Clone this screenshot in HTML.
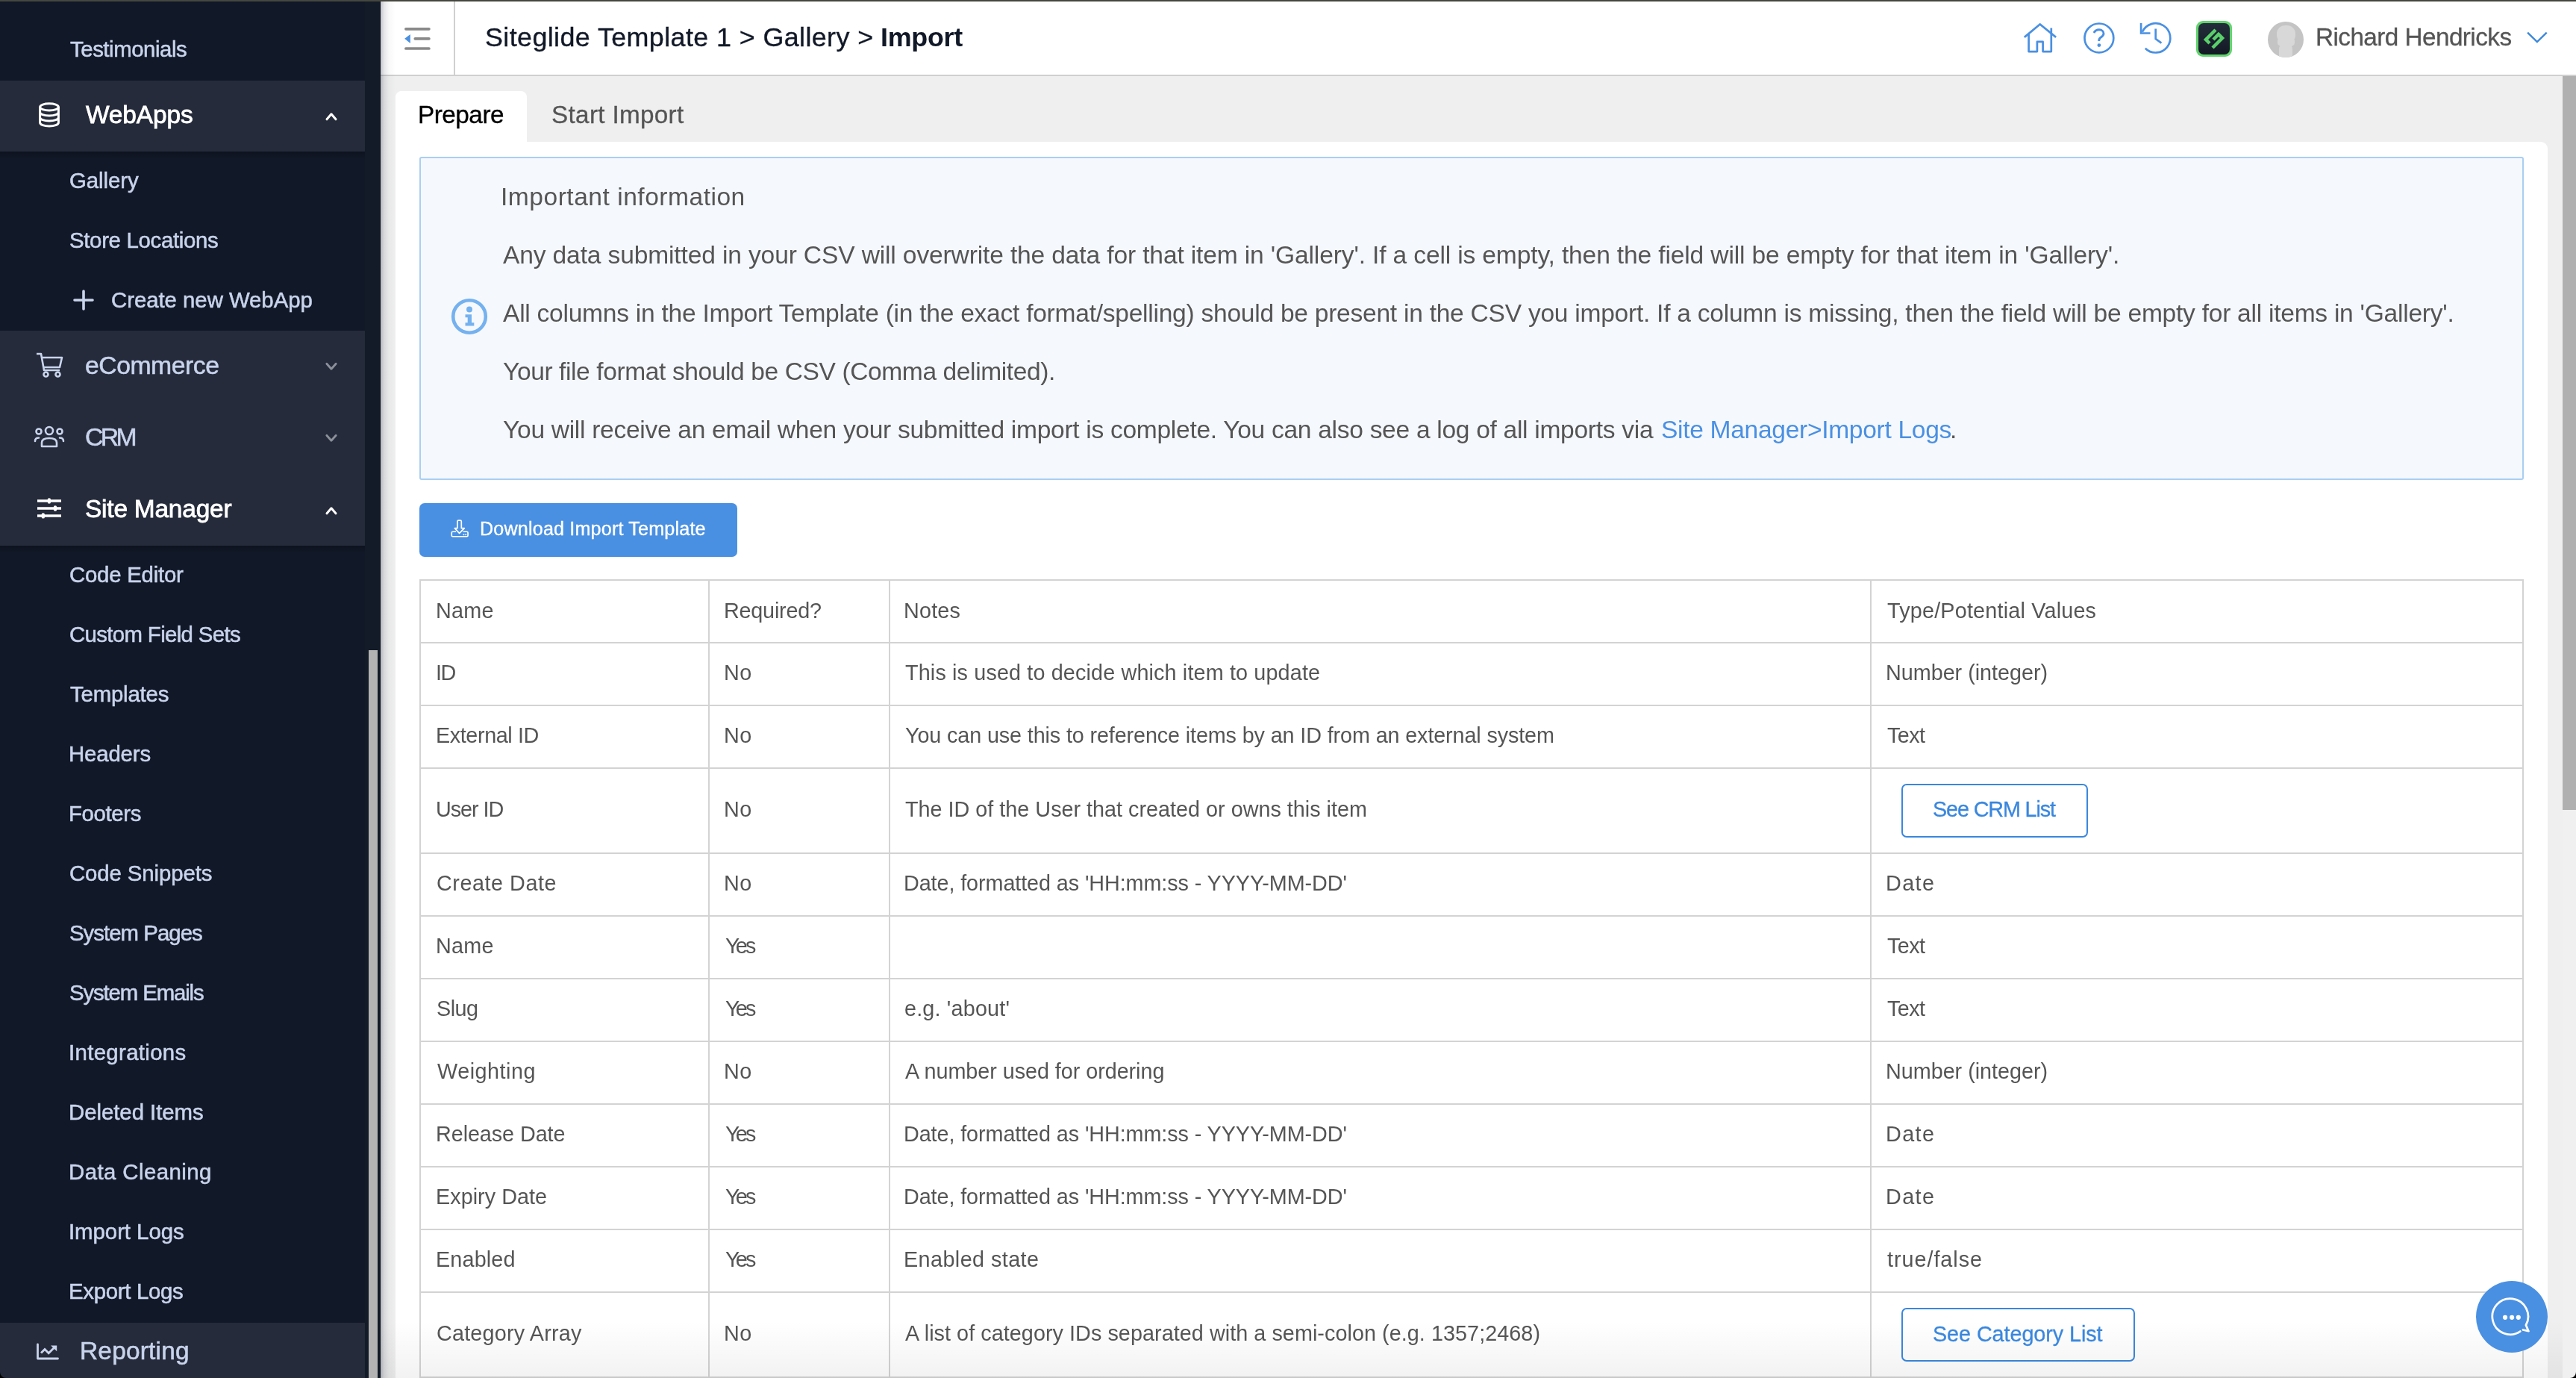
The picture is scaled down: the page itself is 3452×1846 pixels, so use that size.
<!DOCTYPE html>
<html><head><meta charset="utf-8"><style>
html,body{margin:0;padding:0}
body{width:3452px;height:1846px;overflow:hidden;position:relative;font-family:"Liberation Sans",sans-serif;background:#efefef}
.r{position:absolute}
.t{position:absolute;white-space:nowrap;line-height:1;will-change:transform}
.sb{-webkit-text-stroke:0.55px currentColor}
</style></head><body>
<div class="r" style="left:0px;top:0px;width:510px;height:1846px;background:#111827;"></div>
<div class="r" style="left:0px;top:108px;width:489px;height:95px;background:#252b3a;"></div>
<div class="r" style="left:0px;top:443px;width:489px;height:96px;background:#252b3a;"></div>
<div class="r" style="left:0px;top:539px;width:489px;height:96px;background:#252b3a;"></div>
<div class="r" style="left:0px;top:635px;width:489px;height:96px;background:#252b3a;"></div>
<div class="r" style="left:0px;top:1772px;width:489px;height:74px;background:#252b3a;"></div>
<div class="r" style="left:0px;top:203px;width:489px;height:10px;background:linear-gradient(rgba(0,0,0,0.22),rgba(0,0,0,0));"></div>
<div class="r" style="left:0px;top:731px;width:489px;height:10px;background:linear-gradient(rgba(0,0,0,0.22),rgba(0,0,0,0));"></div>
<div class="r" style="left:489px;top:0px;width:21px;height:1846px;background:#131a28;"></div>
<div class="r" style="left:494px;top:871px;width:12px;height:975px;background:#b3b3b3;"></div>
<div class="r" style="left:509px;top:2px;width:1px;height:1844px;background:#0a101c;"></div>
<div class="r" style="left:510px;top:2px;width:2942px;height:98px;background:#ffffff;"></div>
<div class="r" style="left:510px;top:100px;width:2942px;height:2px;background:#cfcfcf;"></div>
<div class="r" style="left:510px;top:102px;width:2942px;height:1744px;background:#efefef;"></div>
<div class="r" style="left:608px;top:2px;width:2px;height:98px;background:#d0d0d0;"></div>
<div class="r" style="left:510px;top:2px;width:20px;height:1844px;background:linear-gradient(90deg,rgba(15,25,45,0.26),rgba(15,25,45,0.10) 25%,rgba(15,25,45,0.03) 55%,rgba(15,25,45,0));"></div>
<div class="r" style="left:0px;top:0px;width:3452px;height:2px;background:#45473f;"></div>
<div class="r" style="left:530px;top:122px;width:176px;height:78px;background:#ffffff;border-radius:8px 8px 0 0"></div>
<div class="r" style="left:530px;top:190px;width:2884px;height:1656px;background:#ffffff;border-radius:0 9px 0 0"></div>
<div class="r" style="left:562px;top:210px;width:2820px;height:433px;background:#f5f8fd;border:2px solid #a9cff2;box-sizing:border-box;border-radius:3px"></div>
<div class="r" style="left:562px;top:674px;width:426px;height:72px;background:#4a90e2;border-radius:7px"></div>
<div class="r" style="left:562px;top:776px;width:2820px;height:2px;background:#d3d3d3;"></div>
<div class="r" style="left:562px;top:860px;width:2820px;height:2px;background:#d3d3d3;"></div>
<div class="r" style="left:562px;top:944px;width:2820px;height:2px;background:#d3d3d3;"></div>
<div class="r" style="left:562px;top:1028px;width:2820px;height:2px;background:#d3d3d3;"></div>
<div class="r" style="left:562px;top:1142px;width:2820px;height:2px;background:#d3d3d3;"></div>
<div class="r" style="left:562px;top:1226px;width:2820px;height:2px;background:#d3d3d3;"></div>
<div class="r" style="left:562px;top:1310px;width:2820px;height:2px;background:#d3d3d3;"></div>
<div class="r" style="left:562px;top:1394px;width:2820px;height:2px;background:#d3d3d3;"></div>
<div class="r" style="left:562px;top:1478px;width:2820px;height:2px;background:#d3d3d3;"></div>
<div class="r" style="left:562px;top:1562px;width:2820px;height:2px;background:#d3d3d3;"></div>
<div class="r" style="left:562px;top:1646px;width:2820px;height:2px;background:#d3d3d3;"></div>
<div class="r" style="left:562px;top:1730px;width:2820px;height:2px;background:#d3d3d3;"></div>
<div class="r" style="left:562px;top:1844px;width:2820px;height:2px;background:#d3d3d3;"></div>
<div class="r" style="left:562px;top:776px;width:2px;height:1070px;background:#d3d3d3;"></div>
<div class="r" style="left:949px;top:776px;width:2px;height:1070px;background:#d3d3d3;"></div>
<div class="r" style="left:1191px;top:776px;width:2px;height:1070px;background:#d3d3d3;"></div>
<div class="r" style="left:2506px;top:776px;width:2px;height:1070px;background:#d3d3d3;"></div>
<div class="r" style="left:3380px;top:776px;width:2px;height:1070px;background:#d3d3d3;"></div>
<div class="r" style="left:2548px;top:1050px;width:250px;height:72px;background:transparent;border:2px solid #3a87dd;box-sizing:border-box;border-radius:7px"></div>
<div class="r" style="left:2548px;top:1752px;width:313px;height:72px;background:transparent;border:2px solid #3a87dd;box-sizing:border-box;border-radius:7px"></div>
<div class="r" style="left:3434px;top:102px;width:18px;height:1744px;background:#f0f0f0;"></div>
<div class="r" style="left:3434px;top:102px;width:18px;height:983px;background:#b0b0b0;"></div>
<div class="r" style="left:510px;top:1770px;width:2924px;height:76px;background:linear-gradient(rgba(0,0,0,0),rgba(0,0,0,0.05));"></div>
<div class="r" style="left:3318px;top:1716px;width:96px;height:96px;background:#4a90e2;border-radius:50%"></div>

<svg class="r" style="left:540px;top:34px" width="40" height="36" viewBox="0 0 40 36">
 <path d="M3.9 4.8H34.9M16.3 17.8H34.9M3.9 31H34.9" stroke="#898989" stroke-width="3.7" stroke-linecap="round"/>
 <path d="M2.2 17.8L9.8 11.9V23.9Z" fill="#4a90e2"/>
</svg>
<!-- home -->
<svg class="r" style="left:2708px;top:28px" width="52" height="46" viewBox="0 0 52 46">
 <path d="M4.8 21.9L25.7 4.4L47.1 21.9" fill="none" stroke="#4a90e2" stroke-width="2.7"/>
 <path d="M10.6 17.6V41.1H21.9V27.9H29.6V41.1H40.8V9.5" fill="none" stroke="#4a90e2" stroke-width="2.7" stroke-linejoin="round"/>
</svg>
<!-- help -->
<svg class="r" style="left:2790px;top:28px" width="46" height="46" viewBox="0 0 46 46">
 <circle cx="22.9" cy="22.9" r="19.4" fill="none" stroke="#4a90e2" stroke-width="2.7"/>
 <path d="M15.9 16C17.5 13.1 20 11.8 23 11.8C26.5 11.8 29 14 29 17C29 19.5 27 21 25 22.3C23.5 23.3 22.7 24.8 22.7 27" fill="none" stroke="#4a90e2" stroke-width="2.9"/>
 <circle cx="22.9" cy="32.6" r="2.4" fill="#4a90e2"/>
</svg>
<!-- history -->
<svg class="r" style="left:2864px;top:28px" width="50" height="46" viewBox="0 0 50 46">
 <path d="M10.8 36.7A19.6 19.6 0 1 0 6.9 14.7" fill="none" stroke="#4a90e2" stroke-width="2.7"/>
 <path d="M5.1 3.1V16.5H17.5" fill="none" stroke="#4a90e2" stroke-width="2.7"/>
 <path d="M24.7 10.4V24L32.4 29.6" fill="none" stroke="#4a90e2" stroke-width="2.7"/>
</svg>
<!-- logo -->
<div class="r" style="left:2943px;top:28px;width:48px;height:48px;border-radius:9px;background:#62d36e"></div>
<div class="r" style="left:2946px;top:31px;width:42px;height:42px;border-radius:7px;background:linear-gradient(#232c3b,#141a24)"></div>
<svg class="r" style="left:2946px;top:31px" width="42" height="42" viewBox="0 0 42 42">
 <path d="M22 7L8 21L14 27L28 13Z M20 35L34 21L28 15L14 29Z" fill="#5bd36a" opacity="0"/>
 <path d="M23 9L10 22L15 27" fill="none" stroke="#5ad06a" stroke-width="4.5" stroke-linejoin="miter"/>
 <path d="M19 33L32 20L27 15L20 22" fill="none" stroke="#5ad06a" stroke-width="4.5" stroke-linejoin="miter"/>
</svg>
<!-- avatar -->
<div class="r" style="left:3039px;top:29px;width:48px;height:48px;border-radius:50%;background:#c4c4c4;overflow:hidden">
 <div class="r" style="left:11.5px;top:5px;width:25px;height:24px;border-radius:46%;background:#d8d8d8"></div>
 <div class="r" style="left:12.5px;top:20px;width:23px;height:14px;border-radius:40%;background:#d8d8d8"></div>
 <div class="r" style="left:15px;top:28px;width:18px;height:24px;border-radius:9px 9px 0 0;background:#d8d8d8"></div>
</div>
<svg class="r" style="left:3384px;top:42px" width="32" height="18" viewBox="0 0 32 18">
 <path d="M3.1 1.6L15.9 14.1L28.7 1.6" fill="none" stroke="#3a87dd" stroke-width="2.3"/>
</svg>
<!-- sidebar icons -->
<svg class="r" style="left:50px;top:135.5px" width="32" height="36" viewBox="0 0 32 36">
 <ellipse cx="16" cy="7.3" rx="12.4" ry="4.6" fill="none" stroke="#fff" stroke-width="3"/>
 <path d="M3.6 7.3V28.2C3.6 31 9 33 16 33C23 33 28.4 31 28.4 28.2V7.3M3.6 14.2C3.6 17 9 19 16 19C23 19 28.4 17 28.4 14.2M3.6 21.2C3.6 24 9 26 16 26C23 26 28.4 24 28.4 21.2" fill="none" stroke="#fff" stroke-width="3"/>
</svg>
<svg class="r" style="left:430px;top:146px" width="26" height="20" viewBox="0 0 26 20">
 <path d="M8 13.8L14 6.8L20 13.8" fill="none" stroke="#fff" stroke-width="3" stroke-linecap="round" stroke-linejoin="round"/>
</svg>
<svg class="r" style="left:95.5px;top:386px" width="32" height="32" viewBox="0 0 32 32">
 <path d="M16 4V28M4 16H28" stroke="#c8d3ec" stroke-width="3.6" stroke-linecap="round"/>
</svg>
<svg class="r" style="left:46px;top:470px" width="40" height="38" viewBox="0 0 40 38">
 <path d="M3 4H9L13 26H34M11 9H37L34 22H13" fill="none" stroke="#c8d3ec" stroke-width="2.6" stroke-linejoin="round"/>
 <circle cx="15.5" cy="31.5" r="3" fill="none" stroke="#c8d3ec" stroke-width="2.6"/>
 <circle cx="31.5" cy="31.5" r="3" fill="none" stroke="#c8d3ec" stroke-width="2.6"/>
</svg>
<svg class="r" style="left:430px;top:482px" width="26" height="18" viewBox="0 0 26 18">
 <path d="M7.8 5.2L14 12.2L20.2 5.2" fill="none" stroke="#8b909a" stroke-width="2.8" stroke-linecap="round" stroke-linejoin="round"/>
</svg>
<svg class="r" style="left:44px;top:568px" width="44" height="34" viewBox="0 0 44 34">
 <circle cx="22" cy="9" r="5" fill="none" stroke="#c8d3ec" stroke-width="2.6"/>
 <circle cx="8" cy="10" r="3.5" fill="none" stroke="#c8d3ec" stroke-width="2.6"/>
 <circle cx="36" cy="10" r="3.5" fill="none" stroke="#c8d3ec" stroke-width="2.6"/>
 <path d="M12 30V25C12 21 16 19 22 19C28 19 32 21 32 25V30Z" fill="none" stroke="#c8d3ec" stroke-width="2.6" stroke-linejoin="round"/>
 <path d="M3 23C3 20 5 18.5 8 18.5M41 23C41 20 39 18.5 36 18.5" fill="none" stroke="#c8d3ec" stroke-width="2.6" stroke-linecap="round"/>
</svg>
<svg class="r" style="left:430px;top:578px" width="26" height="18" viewBox="0 0 26 18">
 <path d="M7.8 5.2L14 12.2L20.2 5.2" fill="none" stroke="#8b909a" stroke-width="2.8" stroke-linecap="round" stroke-linejoin="round"/>
</svg>
<svg class="r" style="left:48px;top:664px" width="36" height="34" viewBox="0 0 36 34">
 <path d="M2 6.9H34M2 16.9H34M2 26.9H34" stroke="#fff" stroke-width="3.5"/>
 <path d="M17.9 5.4V8.6M26 15.4V18.6M9.8 25.4V28.4" stroke="#fff" stroke-width="4.4" stroke-linecap="round"/>
</svg>
<svg class="r" style="left:430px;top:674px" width="26" height="20" viewBox="0 0 26 20">
 <path d="M8 13.8L14 6.8L20 13.8" fill="none" stroke="#fff" stroke-width="3" stroke-linecap="round" stroke-linejoin="round"/>
</svg>
<svg class="r" style="left:47px;top:1798px" width="34" height="26" viewBox="0 0 34 26">
 <path d="M3.5 3V22H30.5" fill="none" stroke="#c8d3ec" stroke-width="2.8" stroke-linecap="round" stroke-linejoin="round"/>
 <path d="M9 13.5L13 9.4L18.2 14.7L25 8" fill="none" stroke="#c8d3ec" stroke-width="2.8" stroke-linecap="square"/>
 <path d="M21 4.4H29.2V12.2Z" fill="#c8d3ec"/>
</svg>
<!-- info icon -->
<svg class="r" style="left:603px;top:398px" width="52" height="52" viewBox="0 0 52 52">
 <circle cx="26" cy="26" r="21.8" fill="none" stroke="#74b1ef" stroke-width="4.6"/>
 <circle cx="26" cy="16.6" r="4" fill="#74b1ef"/>
 <path d="M20.5 23.2H29V34.3H32.3V38.6H20.5V34.3H23.7V27.3H20.5Z" fill="#74b1ef"/>
</svg>
<!-- download icon -->
<svg class="r" style="left:602px;top:694px" width="28" height="28" viewBox="0 0 28 28">
 <path d="M10.9 4.6Q10.9 3.1 12.4 3.1H14.8Q16.3 3.1 16.3 4.6V13.6H20.3L13.6 20.4L7.3 13.6H10.9Z" fill="none" stroke="#fff" stroke-width="1.7" stroke-linejoin="round"/>
 <path d="M9 18.25H4.7Q3.25 18.25 3.25 19.7V23.3Q3.25 24.75 4.7 24.75H23.6Q25.05 24.75 25.05 23.3V19.7Q25.05 18.25 23.6 18.25H18.6" fill="none" stroke="#fff" stroke-width="1.7"/>
 <circle cx="19.4" cy="22.3" r="1.05" fill="#fff"/><circle cx="22.2" cy="22.3" r="1.05" fill="#fff"/>
</svg>
<!-- chat -->
<svg class="r" style="left:3318px;top:1716px" width="96" height="96" viewBox="0 0 96 96">
 <path d="M59.2 67.6A24 24 0 1 1 66.9 59.2L70.4 67.2L63 65.5" fill="none" stroke="#fff" stroke-width="2.8" stroke-linecap="round" stroke-linejoin="round"/>
 <circle cx="39" cy="48.8" r="3.1" fill="#fff"/><circle cx="48.1" cy="48.8" r="3.1" fill="#fff"/><circle cx="56.8" cy="48.8" r="3.1" fill="#fff"/>
</svg>
<!-- window corners -->
<svg class="r" style="left:0px;top:1838px" width="8" height="8" viewBox="0 0 12 12"><path d="M0 0V12H12A12 12 0 0 1 0 0Z" fill="#000"/></svg>
<svg class="r" style="left:3444px;top:1838px" width="8" height="8" viewBox="0 0 12 12"><path d="M12 0V12H0A12 12 0 0 0 12 0Z" fill="#000"/></svg>

<div class="t sb" style="left:94px;top:51.15px;font-size:29.36px;color:#c8d3ec;letter-spacing:-0.441px">Testimonials</div>
<div class="t sb" style="left:114.6px;top:136.90px;font-size:33.43px;color:#ffffff;letter-spacing:-0.097px;-webkit-text-stroke:0.8px currentColor">WebApps</div>
<div class="t sb" style="left:93px;top:227.35px;font-size:29.36px;color:#c8d3ec;letter-spacing:-0.053px">Gallery</div>
<div class="t sb" style="left:93px;top:307.15px;font-size:29.36px;color:#c8d3ec;letter-spacing:-0.309px">Store Locations</div>
<div class="t sb" style="left:148.5px;top:387.45px;font-size:29.36px;color:#c8d3ec;letter-spacing:-0.034px">Create new WebApp</div>
<div class="t sb" style="left:114px;top:472.66px;font-size:33.72px;color:#c8d3ec;letter-spacing:-0.459px">eCommerce</div>
<div class="t sb" style="left:114px;top:569.46px;font-size:33.72px;color:#c8d3ec;letter-spacing:-3.601px">CRM</div>
<div class="t sb" style="left:113.6px;top:664.70px;font-size:33.43px;color:#ffffff;letter-spacing:-0.205px;-webkit-text-stroke:0.8px currentColor">Site Manager</div>
<div class="t sb" style="left:93px;top:755.15px;font-size:29.36px;color:#c8d3ec;letter-spacing:-0.226px">Code Editor</div>
<div class="t sb" style="left:93px;top:835.15px;font-size:29.36px;color:#c8d3ec;letter-spacing:-0.636px">Custom Field Sets</div>
<div class="t sb" style="left:94px;top:915.15px;font-size:29.36px;color:#c8d3ec;letter-spacing:-0.179px">Templates</div>
<div class="t sb" style="left:92px;top:995.15px;font-size:29.36px;color:#c8d3ec;letter-spacing:-0.149px">Headers</div>
<div class="t sb" style="left:92px;top:1075.15px;font-size:29.36px;color:#c8d3ec;letter-spacing:-0.359px">Footers</div>
<div class="t sb" style="left:93px;top:1155.15px;font-size:29.36px;color:#c8d3ec;letter-spacing:-0.102px">Code Snippets</div>
<div class="t sb" style="left:93px;top:1235.15px;font-size:29.36px;color:#c8d3ec;letter-spacing:-0.964px">System Pages</div>
<div class="t sb" style="left:93px;top:1315.15px;font-size:29.36px;color:#c8d3ec;letter-spacing:-1.121px">System Emails</div>
<div class="t sb" style="left:92px;top:1395.15px;font-size:29.36px;color:#c8d3ec;letter-spacing:0.342px">Integrations</div>
<div class="t sb" style="left:92px;top:1475.15px;font-size:29.36px;color:#c8d3ec;letter-spacing:-0.038px">Deleted Items</div>
<div class="t sb" style="left:92px;top:1555.15px;font-size:29.36px;color:#c8d3ec;letter-spacing:0.439px">Data Cleaning</div>
<div class="t sb" style="left:92px;top:1635.15px;font-size:29.36px;color:#c8d3ec;letter-spacing:-0.035px">Import Logs</div>
<div class="t sb" style="left:92px;top:1715.15px;font-size:29.36px;color:#c8d3ec;letter-spacing:-0.299px">Export Logs</div>
<div class="t sb" style="left:107px;top:1792.70px;font-size:33.43px;color:#c8d3ec;letter-spacing:0.209px">Reporting</div>
<div class="t" style="left:650px;top:32.81px;font-size:35.9px;color:#111827;letter-spacing:0.388px;-webkit-text-stroke:0.35px currentColor">Siteglide Template 1 &gt; Gallery &gt;</div>
<div class="t" style="left:1180.3px;top:32.81px;font-size:35.9px;color:#111827;letter-spacing:-0.28px;font-weight:700">Import</div>
<div class="t" style="left:3102.6px;top:32.73px;font-size:33.28px;color:#555555;letter-spacing:-0.546px;-webkit-text-stroke:0.3px currentColor">Richard Hendricks</div>
<div class="t" style="left:560px;top:136.83px;font-size:33.28px;color:#000000;letter-spacing:-0.474px;-webkit-text-stroke:0.35px currentColor">Prepare</div>
<div class="t" style="left:739px;top:136.83px;font-size:33.28px;color:#555555;letter-spacing:0.316px;-webkit-text-stroke:0.3px currentColor">Start Import</div>
<div class="t" style="left:671px;top:246.97px;font-size:33.58px;color:#555555;letter-spacing:0.5px">Important information</div>
<div class="t" style="left:674px;top:324.97px;font-size:33.58px;color:#555555;letter-spacing:-0.149px">Any data submitted in your CSV will overwrite the data for that item in 'Gallery'. If a cell is empty, then the field will be empty for that item in 'Gallery'.</div>
<div class="t" style="left:674px;top:402.57px;font-size:33.58px;color:#555555;letter-spacing:-0.266px">All columns in the Import Template (in the exact format/spelling) should be present in the CSV you import. If a column is missing, then the field will be empty for all items in 'Gallery'.</div>
<div class="t" style="left:674px;top:480.57px;font-size:33.58px;color:#555555;letter-spacing:-0.414px">Your file format should be CSV (Comma delimited).</div>
<div class="t" style="left:674px;top:558.57px;font-size:33.58px;color:#555555;letter-spacing:-0.306px">You will receive an email when your submitted import is complete. You can also see a log of all imports via </div>
<div class="t" style="left:2225.5px;top:558.57px;font-size:33.58px;color:#4a90e2;letter-spacing:-0.319px">Site Manager&gt;Import Logs</div>
<div class="t" style="left:2613px;top:558.57px;font-size:33.58px;color:#555555;letter-spacing:0px">.</div>
<div class="t" style="left:643px;top:695.81px;font-size:25.15px;color:#ffffff;letter-spacing:0.172px;-webkit-text-stroke:0.35px currentColor">Download Import Template</div>
<div class="t" style="left:583.5px;top:803.64px;font-size:28.78px;color:#555555;letter-spacing:0.255px">Name</div>
<div class="t" style="left:970px;top:803.64px;font-size:28.78px;color:#555555;letter-spacing:-0.217px">Required?</div>
<div class="t" style="left:1211px;top:803.64px;font-size:28.78px;color:#555555;letter-spacing:0.185px">Notes</div>
<div class="t" style="left:2529px;top:803.64px;font-size:28.78px;color:#555555;letter-spacing:0.194px">Type/Potential Values</div>
<div class="t" style="left:583.5px;top:886.64px;font-size:28.78px;color:#555555;letter-spacing:-1.492px">ID</div>
<div class="t" style="left:970px;top:886.64px;font-size:28.78px;color:#555555;letter-spacing:0.526px">No</div>
<div class="t" style="left:1213px;top:886.64px;font-size:28.78px;color:#555555;letter-spacing:0.142px">This is used to decide which item to update</div>
<div class="t" style="left:2527px;top:886.64px;font-size:28.78px;color:#555555;letter-spacing:-0.022px">Number (integer)</div>
<div class="t" style="left:583.5px;top:970.84px;font-size:28.78px;color:#555555;letter-spacing:-0.401px">External ID</div>
<div class="t" style="left:970px;top:970.84px;font-size:28.78px;color:#555555;letter-spacing:0.526px">No</div>
<div class="t" style="left:1213px;top:970.84px;font-size:28.78px;color:#555555;letter-spacing:-0.125px">You can use this to reference items by an ID from an external system</div>
<div class="t" style="left:2529px;top:970.84px;font-size:28.78px;color:#555555;letter-spacing:-0.587px">Text</div>
<div class="t" style="left:583.5px;top:1070.24px;font-size:28.78px;color:#555555;letter-spacing:-1.036px">User ID</div>
<div class="t" style="left:970px;top:1070.24px;font-size:28.78px;color:#555555;letter-spacing:0.526px">No</div>
<div class="t" style="left:1213px;top:1070.24px;font-size:28.78px;color:#555555;letter-spacing:0.005px">The ID of the User that created or owns this item</div>
<div class="t" style="left:584.5px;top:1168.64px;font-size:28.78px;color:#555555;letter-spacing:0.541px">Create Date</div>
<div class="t" style="left:970px;top:1168.64px;font-size:28.78px;color:#555555;letter-spacing:0.526px">No</div>
<div class="t" style="left:1211px;top:1168.64px;font-size:28.78px;color:#555555;letter-spacing:-0.089px">Date, formatted as 'HH:mm:ss - YYYY-MM-DD'</div>
<div class="t" style="left:2527px;top:1168.64px;font-size:28.78px;color:#555555;letter-spacing:1.412px">Date</div>
<div class="t" style="left:583.5px;top:1252.64px;font-size:28.78px;color:#555555;letter-spacing:0.255px">Name</div>
<div class="t" style="left:972px;top:1252.64px;font-size:28.78px;color:#555555;letter-spacing:-2.771px">Yes</div>
<div class="t" style="left:2529px;top:1252.64px;font-size:28.78px;color:#555555;letter-spacing:-0.587px">Text</div>
<div class="t" style="left:584.5px;top:1337.04px;font-size:28.78px;color:#555555;letter-spacing:-0.525px">Slug</div>
<div class="t" style="left:972px;top:1337.04px;font-size:28.78px;color:#555555;letter-spacing:-2.771px">Yes</div>
<div class="t" style="left:1212px;top:1337.04px;font-size:28.78px;color:#555555;letter-spacing:0.177px">e.g. 'about'</div>
<div class="t" style="left:2529px;top:1337.04px;font-size:28.78px;color:#555555;letter-spacing:-0.587px">Text</div>
<div class="t" style="left:585.5px;top:1421.04px;font-size:28.78px;color:#555555;letter-spacing:0.513px">Weighting</div>
<div class="t" style="left:970px;top:1421.04px;font-size:28.78px;color:#555555;letter-spacing:0.526px">No</div>
<div class="t" style="left:1213px;top:1421.04px;font-size:28.78px;color:#555555;letter-spacing:-0.047px">A number used for ordering</div>
<div class="t" style="left:2527px;top:1421.04px;font-size:28.78px;color:#555555;letter-spacing:-0.022px">Number (integer)</div>
<div class="t" style="left:583.5px;top:1504.64px;font-size:28.78px;color:#555555;letter-spacing:-0.072px">Release Date</div>
<div class="t" style="left:972px;top:1504.64px;font-size:28.78px;color:#555555;letter-spacing:-2.771px">Yes</div>
<div class="t" style="left:1211px;top:1504.64px;font-size:28.78px;color:#555555;letter-spacing:-0.089px">Date, formatted as 'HH:mm:ss - YYYY-MM-DD'</div>
<div class="t" style="left:2527px;top:1504.64px;font-size:28.78px;color:#555555;letter-spacing:1.412px">Date</div>
<div class="t" style="left:583.5px;top:1588.64px;font-size:28.78px;color:#555555;letter-spacing:0.032px">Expiry Date</div>
<div class="t" style="left:972px;top:1588.64px;font-size:28.78px;color:#555555;letter-spacing:-2.771px">Yes</div>
<div class="t" style="left:1211px;top:1588.64px;font-size:28.78px;color:#555555;letter-spacing:-0.089px">Date, formatted as 'HH:mm:ss - YYYY-MM-DD'</div>
<div class="t" style="left:2527px;top:1588.64px;font-size:28.78px;color:#555555;letter-spacing:1.412px">Date</div>
<div class="t" style="left:583.5px;top:1672.64px;font-size:28.78px;color:#555555;letter-spacing:0.155px">Enabled</div>
<div class="t" style="left:972px;top:1672.64px;font-size:28.78px;color:#555555;letter-spacing:-2.771px">Yes</div>
<div class="t" style="left:1211px;top:1672.64px;font-size:28.78px;color:#555555;letter-spacing:0.423px">Enabled state</div>
<div class="t" style="left:2529px;top:1672.64px;font-size:28.78px;color:#555555;letter-spacing:0.964px">true/false</div>
<div class="t" style="left:584.5px;top:1771.64px;font-size:28.78px;color:#555555;letter-spacing:0.188px">Category Array</div>
<div class="t" style="left:970px;top:1771.64px;font-size:28.78px;color:#555555;letter-spacing:0.526px">No</div>
<div class="t" style="left:1213px;top:1771.64px;font-size:28.78px;color:#555555;letter-spacing:0.054px">A list of category IDs separated with a semi-colon (e.g. 1357;2468)</div>
<div class="t" style="left:2590px;top:1070.04px;font-size:28.78px;color:#3a87dd;letter-spacing:-1.132px;-webkit-text-stroke:0.3px currentColor">See CRM List</div>
<div class="t" style="left:2590px;top:1773.14px;font-size:28.78px;color:#3a87dd;letter-spacing:-0.066px;-webkit-text-stroke:0.3px currentColor">See Category List</div>
</body></html>
